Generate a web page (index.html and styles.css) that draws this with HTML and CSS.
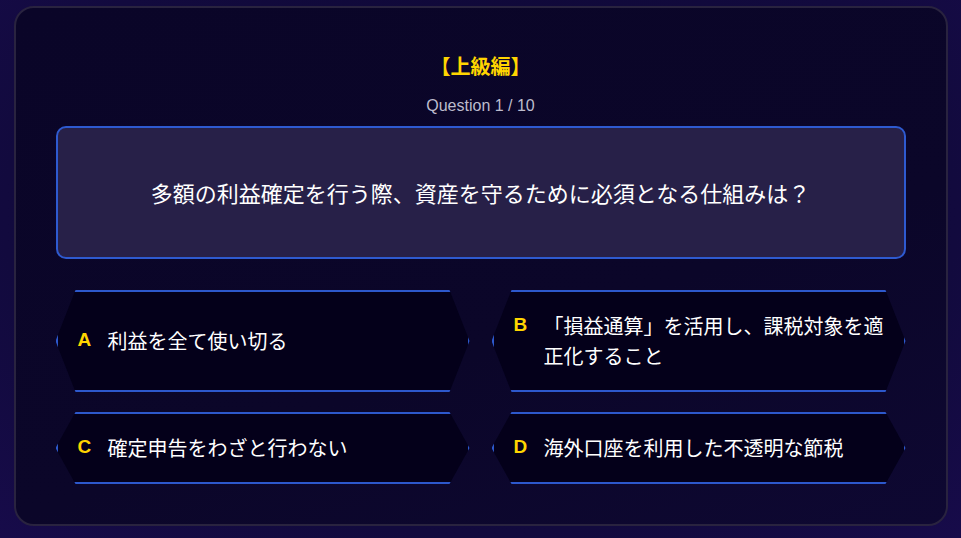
FILE: index.html
```html
<!DOCTYPE html>
<html lang="ja">
<head>
<meta charset="utf-8">
<title>Quiz</title>
<link rel="stylesheet" href="styles.css">
</head>
<body>
<main class="quiz">
  <h1 class="level">【上級編】</h1>
  <p class="progress">Question 1 / 10</p>
  <div class="question">多額の利益確定を行う際、資産を守るために必須となる仕組みは？</div>
  <div class="answers">
    <div class="answer"><div class="answer-row"><span class="letter">A</span><span class="answer-text">利益を全て使い切る</span></div></div>
    <div class="answer"><div class="answer-row"><span class="letter">B</span><span class="answer-text">「損益通算」を活用し、課税対象を適正化すること</span></div></div>
    <div class="answer"><div class="answer-row"><span class="letter">C</span><span class="answer-text">確定申告をわざと行わない</span></div></div>
    <div class="answer"><div class="answer-row"><span class="letter">D</span><span class="answer-text">海外口座を利用した不透明な節税</span></div></div>
  </div>
</main>
</body>
</html>
```
FILE: styles.css
```css
* { box-sizing: border-box; }
html, body { height: 100%; }
body {
  margin: 0;
  padding-top: 6px;
  background: radial-gradient(ellipse at 50% 40%, #0d0733 0%, #120a3e 70%, #170b4a 100%);
  font-family: "Liberation Sans", Arial, "Noto Sans CJK JP", sans-serif;
  color: #fff;
  overflow: hidden;
}
.quiz {
  width: 934px;
  margin: 0 auto;
  padding: 40px;
  border: 2px solid #29233f;
  border-radius: 20px;
  background: linear-gradient(160deg, #0a0528 0%, #0b0629 60%, #0e0832 100%);
}
.level {
  margin: 0;
  text-align: center;
  font-size: 20px;
  line-height: 36px;
  font-weight: bold;
  color: #ffd500;
  font-family: "Noto Sans CJK JP", sans-serif;
}
.progress {
  margin: 10px 0 0;
  text-align: center;
  font-size: 16px;
  line-height: 24px;
  color: #bdbccd;
}
.question {
  margin-top: 8px;
  padding: 48px 20px;
  border: 2px solid #2e5ad0;
  border-radius: 10px;
  background: #272048;
  text-align: center;
  font-family: "Noto Sans CJK JP", sans-serif;
  font-size: 22px;
  line-height: 33px;
  color: #fff;
}
.answers {
  margin-top: 31px;
  display: grid;
  grid-template-columns: 1fr 1fr;
  column-gap: 22px;
  row-gap: 20px;
}
.answer {
  display: flex;
  align-items: center;
  padding: 19px 20px;
  border: 2px solid #2d58cc;
  background: #04001a;
  clip-path: polygon(20px 0, calc(100% - 20px) 0, 100% 50%, calc(100% - 20px) 100%, 20px 100%, 0 50%);
}
.answer-row {
  display: flex;
  align-items: flex-start;
}
.letter {
  flex: 0 0 15px;
  margin-right: 15px;
  font-family: "Liberation Sans", Arial, sans-serif;
  font-weight: bold;
  font-size: 19px;
  line-height: 27px;
  color: #ffd500;
}
.answer-text {
  font-family: "Noto Sans CJK JP", sans-serif;
  font-size: 20px;
  line-height: 30px;
  color: #fff;
}
```
